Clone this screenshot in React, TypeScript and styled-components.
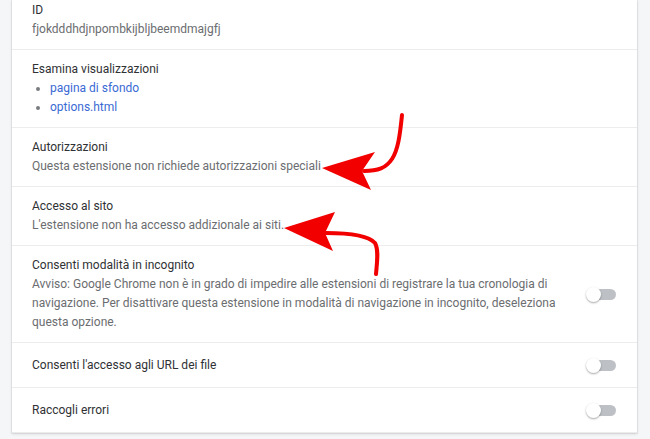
import styled, { createGlobalStyle } from 'styled-components';

const GlobalStyle = createGlobalStyle`
  html, body {
    margin: 0;
    padding: 0;
    background: #f5f6f7;
    font-family: Roboto, "Noto Sans", "Liberation Sans", sans-serif;
  }
`;

/* =========================
   PAGE
========================= */
const Page = styled.div`
  position: relative;
  width: 650px;
  height: 439px;
  overflow: hidden;
  padding: 0 13px 0 12px;
  box-sizing: border-box;
`;

const Card = styled.div`
  background: #ffffff;
  box-shadow: 0 0 0 1px rgba(0, 0, 0, 0.05), 0 1px 3px rgba(0, 0, 0, 0.12);
  display: flex;
  flex-direction: column;
`;

const Row = styled.div<{ $first?: boolean; $toggle?: boolean }>`
  display: flex;
  align-items: center;
  padding: ${({ $first }) => ($first ? '1px' : '10px')} 21px 10px 20px;
  min-height: ${({ $toggle }) => ($toggle ? '24px' : '0')};
  border-bottom: 1px solid #ececec;
  font-size: 12px;
  line-height: 19px;
`;

const RowText = styled.div`
  flex: 1;
  min-width: 0;
`;

const Label = styled.div`
  color: #303134;
`;

const Secondary = styled.div`
  color: #6b6d70;
`;

const LinkList = styled.ul`
  margin: 0;
  padding-left: 18px;
`;

const LinkItem = styled.li`
  color: #3a6ad4;

  &::marker {
    color: #7a7d80;
  }
`;

const Toggle = styled.div`
  position: relative;
  flex: none;
  width: 30px;
  height: 15px;
  margin-left: 14px;
`;

const Track = styled.div`
  position: absolute;
  left: 3px;
  top: 2px;
  width: 27px;
  height: 11px;
  border-radius: 6px;
  background: #bdc1c6;
`;

const Knob = styled.div`
  position: absolute;
  left: 0;
  top: 0;
  width: 15px;
  height: 15px;
  border-radius: 50%;
  background: #ffffff;
  box-shadow: 0 1px 2px rgba(0, 0, 0, 0.35);
`;

const Annotations = styled.svg`
  position: absolute;
  left: 0;
  top: 0;
  pointer-events: none;
`;

const Switch = () => (
  <Toggle>
    <Track />
    <Knob />
  </Toggle>
);

export default function App() {
  return (
    <>
      <GlobalStyle />
      <Page>
        <Card>
          <Row $first>
            <RowText>
              <Label>ID</Label>
              <Secondary>fjokdddhdjnpombkijbljbeemdmajgfj</Secondary>
            </RowText>
          </Row>

          <Row>
            <RowText>
              <Label>Esamina visualizzazioni</Label>
              <LinkList>
                <LinkItem>pagina di sfondo</LinkItem>
                <LinkItem>options.html</LinkItem>
              </LinkList>
            </RowText>
          </Row>

          <Row>
            <RowText>
              <Label>Autorizzazioni</Label>
              <Secondary>Questa estensione non richiede autorizzazioni speciali</Secondary>
            </RowText>
          </Row>

          <Row>
            <RowText>
              <Label>Accesso al sito</Label>
              <Secondary>L'estensione non ha accesso addizionale ai siti.</Secondary>
            </RowText>
          </Row>

          <Row>
            <RowText>
              <Label>Consenti modalità in incognito</Label>
              <Secondary>
                Avviso: Google Chrome non è in grado di impedire alle estensioni di registrare la tua
                cronologia di navigazione. Per disattivare questa estensione in modalità di
                navigazione in incognito, deseleziona questa opzione.
              </Secondary>
            </RowText>
            <Switch />
          </Row>

          <Row $toggle>
            <RowText>
              <Label>Consenti l'accesso agli URL dei file</Label>
            </RowText>
            <Switch />
          </Row>

          <Row $toggle>
            <RowText>
              <Label>Raccogli errori</Label>
            </RowText>
            <Switch />
          </Row>
        </Card>

        {/* red hand-drawn arrows over the content */}
        <Annotations width="650" height="439" viewBox="0 0 650 439">
          <path
            d="M402,115 C400,135 398,150 392,159 C386,168 378,171 364,171"
            fill="none"
            stroke="#f20000"
            strokeWidth="4"
            strokeLinecap="round"
          />
          <polygon points="322,168 375,152 362,171 371,190" fill="#f20000" />
          <path
            d="M326,233 C348,233 368,235 375,243 C379,250 377,262 376,274"
            fill="none"
            stroke="#f20000"
            strokeWidth="4"
            strokeLinecap="round"
          />
          <polygon points="284,228 335,212 325,233 333,251" fill="#f20000" />
        </Annotations>
      </Page>
    </>
  );
}
